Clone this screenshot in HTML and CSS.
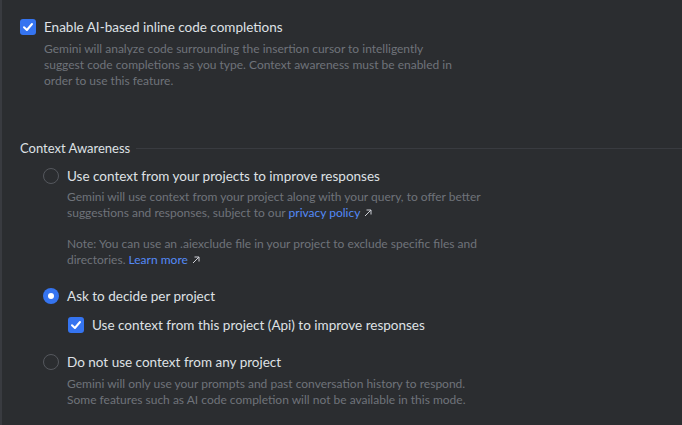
FILE: index.html
```html
<!DOCTYPE html>
<html>
<head>
<meta charset="utf-8">
<link rel="stylesheet" href="styles.css">
</head>
<body>
<div class="page">
  <div class="row">
    <span class="checkbox"><svg viewBox="0 0 16 16" width="16" height="16"><path d="M4 8.2 L6.9 11 L12 5" fill="none" stroke="#fff" stroke-width="2" stroke-linecap="round" stroke-linejoin="round"/></svg></span>
    <span class="label">Enable AI-based inline code completions</span>
  </div>
  <div class="desc top-desc">
    Gemini will analyze code surrounding the insertion cursor to intelligently<br>
    suggest code completions as you type. Context awareness must be enabled in<br>
    order to use this feature.
  </div>

  <div class="section-title">
    <span>Context Awareness</span>
    <span class="rule"></span>
  </div>

  <div class="options">
    <div class="row">
      <span class="radio"></span>
      <span class="label">Use context from your projects to improve responses</span>
    </div>
    <div class="desc opt-desc">
      Gemini will use context from your project along with your query, to offer better<br>
      suggestions and responses, subject to our <a class="link">privacy policy</a><svg class="ext" viewBox="0 0 10 10" width="10" height="10"><path d="M2 8 L8 2 M3.5 2 H8 V6.5" fill="none" stroke="#ced0d6" stroke-width="1"/></svg>
    </div>
    <div class="desc opt-desc note">
      Note: You can use an .aiexclude file in your project to exclude specific files and<br>
      directories. <a class="link">Learn more</a><svg class="ext" viewBox="0 0 10 10" width="10" height="10"><path d="M2 8 L8 2 M3.5 2 H8 V6.5" fill="none" stroke="#ced0d6" stroke-width="1"/></svg>
    </div>

    <div class="row opt2">
      <span class="radio selected"></span>
      <span class="label">Ask to decide per project</span>
    </div>
    <div class="row sub">
      <span class="checkbox"><svg viewBox="0 0 16 16" width="16" height="16"><path d="M4 8.2 L6.9 11 L12 5" fill="none" stroke="#fff" stroke-width="2" stroke-linecap="round" stroke-linejoin="round"/></svg></span>
      <span class="label">Use context from this project (Api) to improve responses</span>
    </div>

    <div class="row opt3">
      <span class="radio"></span>
      <span class="label">Do not use context from any project</span>
    </div>
    <div class="desc opt-desc last">
      Gemini will only use your prompts and past conversation history to respond.<br>
      Some features such as AI code completion will not be available in this mode.
    </div>
  </div>
</div>
</body>
</html>
```
FILE: styles.css
```css
html, body {
  margin: 0;
  padding: 0;
  background: #2b2d30;
  height: 100%;
}
body {
  font-family: Lato, "Liberation Sans", sans-serif;
  color: #dfe1e5;
  font-size: 13px;
}
.page {
  border-left: 2px solid #393b40;
  min-height: 100%;
  box-sizing: border-box;
  padding: 19px 0 0 18px;
}
.row {
  display: flex;
  align-items: center;
  gap: 8px;
  height: 16px;
  line-height: 16px;
}
.label {
  font-size: 13.5px;
}
.checkbox {
  width: 16px;
  height: 16px;
  border-radius: 3px;
  background: #3574f0;
  display: block;
  flex: none;
}
.checkbox svg { display: block; }
.radio {
  width: 16px;
  height: 16px;
  box-sizing: border-box;
  border-radius: 50%;
  border: 1px solid #55585e;
  flex: none;
  position: relative;
}
.radio.selected {
  border: none;
  background: #3574f0;
}
.radio.selected::after {
  content: "";
  position: absolute;
  left: 5px;
  top: 5px;
  width: 6px;
  height: 6px;
  border-radius: 50%;
  background: #fff;
}
.desc {
  font-size: 12px;
  line-height: 16px;
  color: #6f737a;
  margin-left: 24px;
}
.top-desc { margin-top: 6px; }
.section-title {
  margin-top: 51px;
  display: flex;
  align-items: center;
  gap: 6px;
  height: 16px;
  line-height: 16px;
}
.rule {
  flex: 1;
  height: 1px;
  background: #393b40;
}
.options {
  margin-left: 23px;
  margin-top: 12px;
}
.opt-desc { margin-top: 5px; }
.note { margin-top: 15px; }
.link { color: #548af7; }
.ext { margin-left: 3px; vertical-align: -1px; }
.opt2 { margin-top: 20px; }
.sub { margin-top: 13px; margin-left: 25px; }
.opt3 { margin-top: 21px; }
.last { margin-top: 6px; }
```
